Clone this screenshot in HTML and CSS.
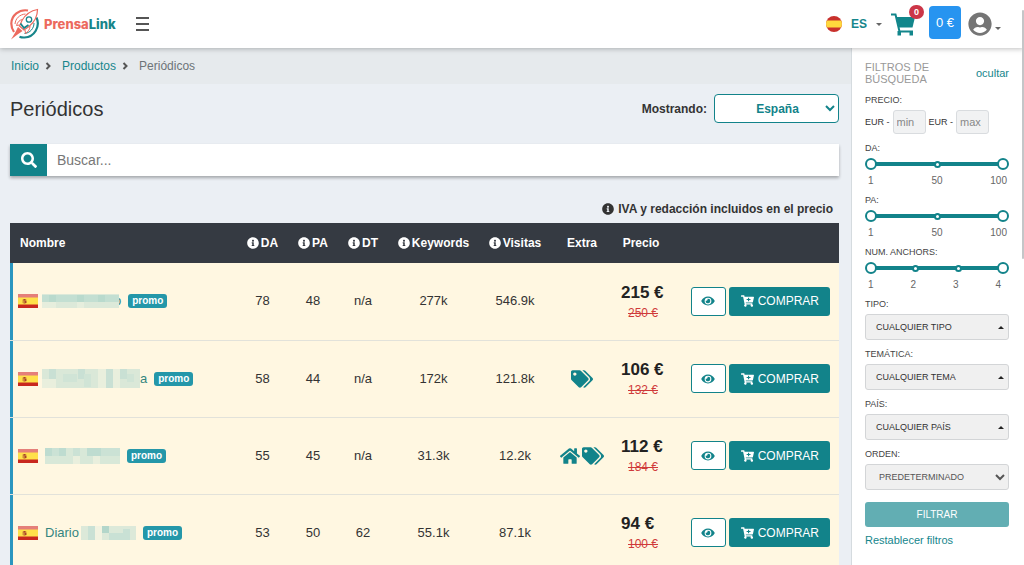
FILE: index.html
```html
<!DOCTYPE html>
<html lang="es">
<head>
<meta charset="utf-8">
<meta name="viewport" content="width=device-width, initial-scale=1">
<title>Periódicos - PrensaLink</title>
<link rel="stylesheet" href="styles.css">
</head>
<body>
<svg class="sprite" aria-hidden="true">
  <symbol id="i-info" viewBox="0 0 512 512"><path d="M256 8C119.043 8 8 119.083 8 256c0 136.997 111.043 248 248 248s248-111.003 248-248C504 119.083 392.957 8 256 8zm0 110c23.196 0 42 18.804 42 42s-18.804 42-42 42-42-18.804-42-42 18.804-42 42-42zm56 254c0 6.627-5.373 12-12 12h-88c-6.627 0-12-5.373-12-12v-24c0-6.627 5.373-12 12-12h12v-64h-12c-6.627 0-12-5.373-12-12v-24c0-6.627 5.373-12 12-12h64c6.627 0 12 5.373 12 12v100h12c6.627 0 12 5.373 12 12v24z"/></symbol>
  <symbol id="i-tags" viewBox="0 0 640 512"><path d="M497.941 225.941L286.059 14.059A48 48 0 0 0 252.118 0H48C21.49 0 0 21.49 0 48v204.118a48 48 0 0 0 14.059 33.941l211.882 211.882c18.744 18.745 49.136 18.746 67.882 0l204.118-204.118c18.745-18.745 18.745-49.137 0-67.882zM112 160c-26.51 0-48-21.49-48-48s21.49-48 48-48 48 21.49 48 48-21.49 48-48 48zm513.941 133.823L421.823 497.941c-18.745 18.745-49.137 18.745-67.882 0l-.36-.36L527.64 323.522c16.999-16.999 26.362-39.6 26.362-63.64s-9.362-46.641-26.362-63.64L331.397 0h48.721a48 48 0 0 1 33.941 14.059l211.882 211.882c18.745 18.745 18.745 49.137 0 67.882z"/></symbol>
  <symbol id="i-home" viewBox="0 0 576 512"><path d="M280.37 148.26L96 300.11V464a16 16 0 0 0 16 16l112.06-.29a16 16 0 0 0 15.92-16V368a16 16 0 0 1 16-16h64a16 16 0 0 1 16 16v95.64a16 16 0 0 0 16 16.05L464 480a16 16 0 0 0 16-16V300L295.67 148.26a12.19 12.19 0 0 0-15.3 0zM571.6 251.47L488 182.56V44.05a12 12 0 0 0-12-12h-56a12 12 0 0 0-12 12v72.61L318.47 43a48 48 0 0 0-61 0L4.34 251.47a12 12 0 0 0-1.6 16.9l25.5 31A12 12 0 0 0 45.15 301l235.22-193.74a12.19 12.19 0 0 1 15.3 0L530.9 301a12 12 0 0 0 16.9-1.6l25.5-31a12 12 0 0 0-1.7-16.93z"/></symbol>
  <symbol id="i-eye" viewBox="0 0 576 512"><path d="M572.52 241.4C518.29 135.59 410.93 64 288 64S57.68 135.64 3.48 241.41a32.35 32.35 0 0 0 0 29.19C57.71 376.41 165.07 448 288 448s230.32-71.64 284.52-177.41a32.35 32.35 0 0 0 0-29.19zM288 400a144 144 0 1 1 144-144 143.93 143.93 0 0 1-144 144zm0-240a95.31 95.31 0 0 0-25.31 3.79 47.85 47.85 0 0 1-66.9 66.9A95.78 95.78 0 1 0 288 160z"/></symbol>
  <symbol id="i-cart-plus" viewBox="0 0 576 512"><path d="M504.717 320H211.572l6.545 32h268.418c15.401 0 26.816 14.301 23.403 29.319l-5.517 24.276C523.112 414.668 536 433.828 536 456c0 31.202-25.519 56.444-56.824 55.994-29.823-.429-54.35-24.631-55.155-54.447-.44-16.287 6.085-31.049 16.803-41.548H231.176C241.553 426.165 248 440.326 248 456c0 31.813-26.528 57.431-58.67 55.938-28.54-1.325-51.751-24.385-53.251-52.917-1.158-22.034 10.436-41.455 28.051-51.586L93.883 64H24C10.745 64 0 53.255 0 40V24C0 10.745 10.745 0 24 0h102.529c11.401 0 21.228 8.021 23.513 19.19L159.208 64H551.99c15.401 0 26.816 14.301 23.403 29.319l-47.273 208C525.637 312.246 515.923 320 504.717 320zM408 168h-48v-40c0-8.837-7.163-16-16-16h-16c-8.837 0-16 7.163-16 16v40h-48c-8.837 0-16 7.163-16 16v16c0 8.837 7.163 16 16 16h48v40c0 8.837 7.163 16 16 16h16c8.837 0 16-7.163 16-16v-40h48c8.837 0 16-7.163 16-16v-16c0-8.837-7.163-16-16-16z"/></symbol>
  <symbol id="i-flag" viewBox="0 0 20 14"><path fill="#e57f79" d="M0 0h20v4H0z"/><path fill="#ffe14a" d="M0 3.5h20V11H0z"/><path fill="#c8281e" d="M0 10.5h20V14H0z"/><path fill="#d09038" d="M4.500 5.500h4v3.600l-2 1-2-1z"/><path fill="#a8402a" d="M5.500 5h2v1.400h-2zM6.700 7h1.600v2H6.700z"/></symbol>
  <symbol id="i-chevron" viewBox="0 0 7 8"><path d="M1.500 1l3 3-3 3" fill="none" stroke="#555" stroke-width="2"/></symbol>
</svg>

<header class="topbar">
  <a class="brand" href="#">
    <svg class="brand-mark" viewBox="0 0 30 32" aria-hidden="true" fill="none">
      <path d="M18 2.500C9 1 1.500 7.500 1.300 15.500c0 3.500 1 6 2.700 8.500" stroke="#ec6a5e" stroke-width="2.200"/>
      <path d="M15.500 6C9.500 6.500 5.500 10.500 5 16" stroke="#ec6a5e" stroke-width="1"/>
      <path d="M26.500 9.500c4 9-2 19.500-12 20-2 .1-3.500-.2-5-.8" stroke="#17858a" stroke-width="2.200"/>
      <path d="M24 15c0 5.500-4 10-9.500 10.500" stroke="#17858a" stroke-width="1"/>
      <path d="M27.500 1.500C21 2.500 15.500 6.500 12 12.500L9.500 18l4.500 4 5-3.500C24.500 14 27.500 8.500 27.500 1.500z" fill="#fff" stroke="#ec6a5e" stroke-width="1.200"/>
      <path d="M12.500 11.500C9.500 12 7.500 14 6.500 17.500l3-.5M20 18c0 3-1.500 5.500-4.500 7.500l-.500-3.500" stroke="#ec6a5e" stroke-width="1"/>
      <circle cx="19" cy="11.500" r="2.700" stroke="#17858a" stroke-width="1.300"/>
      <path d="M10.500 15.500l3.500 4.500 4.500-3" stroke="#17858a" stroke-width="1.800"/>
      <path d="M8 19l4.500 4-5 3.500L1 31.500l4.500-7.500z" fill="#ec6a5e"/>
    </svg>
    <span class="brand-name">Prensa<span class="brand-alt">Link</span></span>
  </a>
  <button class="menu-button" type="button" aria-label="Menú"><span></span><span></span><span></span></button>
  <nav class="tools" aria-label="Cuenta">
    <button class="language" type="button">
      <svg class="round-flag" viewBox="0 0 16 16" aria-hidden="true"><clipPath id="disc"><circle cx="8" cy="8" r="8"/></clipPath><g clip-path="url(#disc)"><path fill="#c8302c" d="M0 0h16v16H0z"/><path fill="#ffd83d" d="M0 4.500h16v7H0z"/></g></svg>
      ES
      <span class="caret"></span>
    </button>
    <a class="cart" href="#" aria-label="Carrito">
      <svg viewBox="0 0 24 23" aria-hidden="true"><path fill="none" stroke="#12868b" stroke-width="2" d="M0 1.500h4.500L8.500 18.500H22"/><path fill="#12868b" d="M5.500 4H24l-2.500 10.500H8z"/><path fill="#12868b" d="M6.500 18h3.500v4.500H6.500zM18.500 18H22v4.500h-3.500z"/></svg>
      <span class="cart-count">0</span>
    </a>
    <a class="balance" href="#">0 €</a>
    <button class="account" type="button" aria-label="Usuario">
      <svg viewBox="0 0 496 512" aria-hidden="true"><path fill="#757575" d="M248 8C111 8 0 119 0 256s111 248 248 248 248-111 248-248S385 8 248 8zm0 96c48.600 0 88 39.400 88 88s-39.400 88-88 88-88-39.400-88-88 39.400-88 88-88zm0 344c-58.700 0-111.300-26.600-146.500-68.200 18.800-35.400 55.600-59.800 98.500-59.800 2.400 0 4.800.4 7.100 1.100 13 4.200 26.600 6.900 40.900 6.900 14.300 0 28-2.700 40.900-6.900 2.300-.7 4.700-1.100 7.100-1.100 42.900 0 79.700 24.400 98.500 59.800C359.300 421.400 306.700 448 248 448z"/></svg>
      <span class="caret"></span>
    </button>
  </nav>
</header>

<div class="layout">
  <main class="main">
    <nav class="breadcrumb" aria-label="Ruta">
      <a href="#">Inicio</a><svg class="sep" aria-hidden="true"><use href="#i-chevron"/></svg>
      <a href="#">Productos</a><svg class="sep" aria-hidden="true"><use href="#i-chevron"/></svg>
      <span>Periódicos</span>
    </nav>
    <div class="content">
      <div class="title-row">
        <h1>Periódicos</h1>
        <label for="country">Mostrando:</label>
        <select id="country" class="country"><option>España</option></select>
      </div>
      <form class="search">
        <button type="button" aria-label="Buscar"><svg viewBox="0 0 512 512" aria-hidden="true"><path fill="#fff" d="M505 442.700L405.300 343c-4.500-4.500-10.600-7-17-7H372c27.600-35.300 44-79.700 44-128C416 93.100 322.900 0 208 0S0 93.100 0 208s93.100 208 208 208c48.300 0 92.700-16.400 128-44v16.300c0 6.400 2.500 12.500 7 17l99.700 99.700c9.400 9.400 24.600 9.400 33.900 0l28.300-28.300c9.400-9.400 9.400-24.600.1-34zM208 336c-70.700 0-128-57.200-128-128 0-70.700 57.200-128 128-128 70.700 0 128 57.200 128 128 0 70.700-57.200 128-128 128z"/></svg></button>
        <input type="text" placeholder="Buscar..." aria-label="Buscar">
      </form>
      <p class="vat-note"><svg class="info" aria-hidden="true"><use href="#i-info"/></svg>IVA y redacción incluidos en el precio</p>

      <table class="papers">
        <colgroup><col><col class="c-da"><col class="c-pa"><col class="c-pa"><col class="c-key"><col class="c-vis"><col class="c-extra"><col class="c-price"><col class="c-act"></colgroup>
        <thead>
          <tr>
            <th class="name-head" scope="col">Nombre</th>
            <th scope="col"><svg class="info" aria-hidden="true"><use href="#i-info"/></svg>DA</th>
            <th scope="col"><svg class="info" aria-hidden="true"><use href="#i-info"/></svg>PA</th>
            <th scope="col"><svg class="info" aria-hidden="true"><use href="#i-info"/></svg>DT</th>
            <th scope="col"><svg class="info" aria-hidden="true"><use href="#i-info"/></svg>Keywords</th>
            <th scope="col"><svg class="info" aria-hidden="true"><use href="#i-info"/></svg>Visitas</th>
            <th scope="col">Extra</th>
            <th scope="col">Precio</th>
            <td></td>
          </tr>
        </thead>
        <tbody>
          <tr>
            <td class="name"><div class="name-line"><svg class="flag" aria-hidden="true"><use href="#i-flag"/></svg>
              <a href="#"><svg class="mosaic" width="77" height="14" viewBox="0 0 77 14" aria-hidden="true"><path fill="#dce9d9" d="M0 0h77v14H0z"/><path fill="#c3dfd2" d="M0 1h7v7H0zM14 1h21v7H14zM42 1h14v7H42zM63 1h14v7H63z"/><path fill="#b9dacd" d="M7 1h7v7H7zM35 1h7v7h-7zM56 1h7v7h-7z"/><path fill="#e6eedd" d="M0 8h14v6H0zM35 8h7v6h-7z"/></svg><span class="tail">o</span></a>
              <span class="promo">promo</span></div></td>
            <td>78</td><td>48</td><td>n/a</td><td>277k</td><td>546.9k</td><td></td>
            <td class="price"><strong>215 €</strong><del>250 €</del></td>
            <td><div class="actions"><button class="view" type="button" aria-label="Ver"><svg aria-hidden="true"><use href="#i-eye"/></svg></button><button class="buy" type="button"><svg aria-hidden="true"><use href="#i-cart-plus"/></svg>COMPRAR</button></div></td>
          </tr>
          <tr>
            <td class="name"><div class="name-line"><svg class="flag" aria-hidden="true"><use href="#i-flag"/></svg>
              <a href="#"><svg class="mosaic" width="98" height="19" viewBox="0 0 98 19" aria-hidden="true"><path fill="#dae8d8" d="M0 0h98v19H0z"/><path fill="#c9e0d4" d="M7 0h7v10H7zM36 0h7v10h-7zM64 0h7v19h-7zM78 0h7v10h-7z"/><path fill="#d0e4d6" d="M21 5h14v8H21zM42 5h7v13h-7zM85 5h7v8h-7z"/><path fill="#e9efdd" d="M0 10h14v9H0zM56 0h8v19h-8zM71 0h7v19h-7z"/></svg><span>a</span></a>
              <span class="promo">promo</span></div></td>
            <td>58</td><td>44</td><td>n/a</td><td>172k</td><td>121.8k</td>
            <td><div class="extras"><svg class="tags" aria-label="Etiquetas"><use href="#i-tags"/></svg></div></td>
            <td class="price"><strong>106 €</strong><del>132 €</del></td>
            <td><div class="actions"><button class="view" type="button" aria-label="Ver"><svg aria-hidden="true"><use href="#i-eye"/></svg></button><button class="buy" type="button"><svg aria-hidden="true"><use href="#i-cart-plus"/></svg>COMPRAR</button></div></td>
          </tr>
          <tr>
            <td class="name"><div class="name-line"><svg class="flag" aria-hidden="true"><use href="#i-flag"/></svg>
              <a class="spaced" href="#"><svg class="mosaic" width="75" height="16" viewBox="0 0 75 16" aria-hidden="true"><path fill="#d8e8d8" d="M0 0h75v16H0z"/><path fill="#bedcd0" d="M0 0h7v8H0zM14 0h7v8h-7zM42 0h14v8H42z"/><path fill="#cbe2d5" d="M7 0h7v8H7zM28 0h7v8h-7zM56 0h19v8H56z"/><path fill="#e9efdd" d="M28 8h7v8h-7zM48 8h7v8h-7z"/></svg></a>
              <span class="promo">promo</span></div></td>
            <td>55</td><td>45</td><td>n/a</td><td>31.3k</td><td>12.2k</td>
            <td><div class="extras"><svg class="home" aria-label="Portada"><use href="#i-home"/></svg><svg class="tags" aria-label="Etiquetas"><use href="#i-tags"/></svg></div></td>
            <td class="price"><strong>112 €</strong><del>184 €</del></td>
            <td><div class="actions"><button class="view" type="button" aria-label="Ver"><svg aria-hidden="true"><use href="#i-eye"/></svg></button><button class="buy" type="button"><svg aria-hidden="true"><use href="#i-cart-plus"/></svg>COMPRAR</button></div></td>
          </tr>
          <tr>
            <td class="name"><div class="name-line"><svg class="flag" aria-hidden="true"><use href="#i-flag"/></svg>
              <a class="spaced" href="#"><span class="word">Diario</span><svg class="mosaic" width="55" height="14" viewBox="0 0 55 14" aria-hidden="true"><path fill="#dce9d9" d="M0 0h55v14H0z"/><path fill="#c9e1d5" d="M7 0h7v14H7zM28 7h14v7H28zM42 3h7v11h-7z"/><path fill="#b3d6ca" d="M21 0h7v7h-7z"/><path fill="#f2f3e1" d="M14 0h7v14h-7z"/></svg></a>
              <span class="promo">promo</span></div></td>
            <td>53</td><td>50</td><td>62</td><td>55.1k</td><td>87.1k</td><td></td>
            <td class="price"><strong>94 €</strong><del>100 €</del></td>
            <td><div class="actions"><button class="view" type="button" aria-label="Ver"><svg aria-hidden="true"><use href="#i-eye"/></svg></button><button class="buy" type="button"><svg aria-hidden="true"><use href="#i-cart-plus"/></svg>COMPRAR</button></div></td>
          </tr>
        </tbody>
      </table>
    </div>
  </main>

  <aside class="filters">
    <div class="filters-head"><h2>FILTROS DE BÚSQUEDA</h2><a href="#">ocultar</a></div>
    <div class="field">
      <span class="caption">PRECIO:</span>
      <div class="price-range">
        <label for="min">EUR -</label><input id="min" type="text" placeholder="min">
        <label for="max">EUR -</label><input id="max" type="text" placeholder="max">
      </div>
    </div>
    <div class="range-field">
      <span class="caption">DA:</span>
      <div class="slider"><div class="track"><i></i><i></i><i></i></div><input type="range" min="1" max="100" value="1" aria-label="DA mínimo"><input type="range" min="1" max="100" value="100" aria-label="DA máximo"></div>
      <div class="scale"><span>1</span><span>50</span><span>100</span></div>
    </div>
    <div class="range-field">
      <span class="caption">PA:</span>
      <div class="slider"><div class="track"><i></i><i></i><i></i></div><input type="range" min="1" max="100" value="1" aria-label="PA mínimo"><input type="range" min="1" max="100" value="100" aria-label="PA máximo"></div>
      <div class="scale"><span>1</span><span>50</span><span>100</span></div>
    </div>
    <div class="range-field">
      <span class="caption">NUM. ANCHORS:</span>
      <div class="slider"><div class="track"><i></i><i></i><i></i><i></i></div><input type="range" min="1" max="4" value="1" aria-label="Anchors mínimo"><input type="range" min="1" max="4" value="4" aria-label="Anchors máximo"></div>
      <div class="scale scale-even"><span>1</span><span>2</span><span>3</span><span>4</span></div>
    </div>
    <div class="field"><span class="caption" id="l-tipo">TIPO:</span><button class="picker" type="button" aria-describedby="l-tipo">CUALQUIER TIPO<span class="caret caret-up"></span></button></div>
    <div class="field"><span class="caption" id="l-tema">TEMÁTICA:</span><button class="picker" type="button" aria-describedby="l-tema">CUALQUIER TEMA<span class="caret caret-up"></span></button></div>
    <div class="field"><span class="caption" id="l-pais">PAÍS:</span><button class="picker" type="button" aria-describedby="l-pais">CUALQUIER PAÍS<span class="caret caret-up"></span></button></div>
    <div class="field"><label class="caption" for="order">ORDEN:</label><select id="order" class="order"><option>PREDETERMINADO</option></select></div>
    <button class="apply" type="button">FILTRAR</button>
    <a class="reset" href="#">Restablecer filtros</a>
  </aside>
</div>
<div class="page-scroll" aria-hidden="true"></div>
</body>
</html>
```

FILE: styles.css
```css
* { box-sizing: border-box; }

html { overflow: hidden; height: 100%; }

body {
  --teal: #12838a;
  margin: 0;
  height: 100%;
  display: flex;
  flex-direction: column;
  overflow: hidden;
  background: #fff;
  color: #333;
  font: 12px/16px "Liberation Sans", Arial, sans-serif;
}

button, input, select { font: inherit; color: inherit; margin: 0; }
button { padding: 0; border: 0; background: none; cursor: pointer; }
a { color: #16868c; text-decoration: none; }
svg { display: block; flex: none; }
.sprite { position: absolute; width: 0; height: 0; }

.caret {
  border: 3px solid transparent;
  border-top-color: #666;
  border-bottom: 0;
}
.caret-up {
  border-top: 0;
  border-bottom: 3px solid #222;
}

/* Top bar */
.topbar {
  position: relative;
  z-index: 2;
  flex: none;
  display: flex;
  align-items: center;
  height: 48px;
  padding: 0 23px 0 10px;
  background: #fff;
  box-shadow: 0 1px 5px rgba(0, 0, 0, .25);
}
.brand { display: flex; align-items: center; gap: 4px; }
.brand-mark { width: 30px; height: 32px; }
.brand-name { font: 800 13px/18px Inter, sans-serif; color: #ec6a5e; }
.brand-alt { color: #17858a; }
.menu-button { display: grid; gap: 4px; width: 13px; margin-left: 20px; }
.menu-button span { height: 2px; background: #555; }
.tools { display: flex; align-items: center; margin-left: auto; }
.language { display: flex; align-items: center; gap: 9px; color: #16868c; font-weight: bold; }
.round-flag { width: 16px; height: 16px; }
.cart { position: relative; margin-left: 9px; }
.cart svg { width: 24px; height: 23px; }
.cart-count {
  position: absolute;
  top: -8px;
  right: -9px;
  min-width: 15px;
  border-radius: 7px;
  background: #cc3648;
  color: #fff;
  font: bold 9px/14px "Liberation Sans", Arial, sans-serif;
  text-align: center;
}
.balance {
  margin: 0 7px 4px 14px;
  padding: 0 7px;
  border-radius: 4px;
  background: #2794f0;
  color: #fff;
  font-size: 13px;
  line-height: 33px;
}
.account { display: flex; align-items: center; gap: 3px; }
.account svg { width: 24px; height: 24px; }
.account .caret { margin-top: 8px; }

/* Layout */
.layout { flex: 1; min-height: 0; display: flex; margin-right: 4px; }
.main { flex: 1; min-width: 0; overflow: hidden; background: #ebeff4; }
.breadcrumb {
  display: flex;
  align-items: center;
  height: 36px;
  padding: 0 11px;
  background: #e6eaed;
  color: #6d7478;
}
.sep { width: 7px; height: 8px; margin: 0 10px 0 6px; }
.content { padding: 10px 12px 0 10px; }
.title-row { display: flex; align-items: center; }
h1 { flex: 1; margin: 0; font-size: 20px; line-height: 28px; font-weight: normal; }
.title-row label { margin-right: 7px; font-weight: bold; }
.country {
  width: 125px;
  height: 29px;
  padding: 0 0 0 14px;
  border: 1px solid var(--teal);
  border-radius: 4px;
  background: #fff;
  color: var(--teal);
  font-weight: bold;
  text-align-last: center;
}
.search {
  display: flex;
  height: 32px;
  margin: 21px 0 25px;
  background: #fff;
  box-shadow: 0 2px 3px rgba(0, 0, 0, .3);
}
.search button { display: grid; place-items: center; width: 37px; background: var(--teal); }
.search svg { width: 16px; height: 16px; }
.search input { flex: 1; min-width: 0; padding: 0 10px; border: 0; outline: 0; background: none; font-size: 14px; }
.search input::placeholder { color: #777; opacity: 1; }
.vat-note {
  display: flex;
  align-items: center;
  justify-content: flex-end;
  margin: 0 6px 6px 0;
  font-weight: bold;
}
.info { display: inline-block; width: 12px; height: 12px; margin-right: 2px; vertical-align: -2px; fill: currentColor; }
.vat-note .info { margin-right: 4px; }

/* Table */
.papers { width: 100%; table-layout: fixed; border-collapse: collapse; text-align: center; font-size: 13px; }
.papers th, .papers td { padding: 0; white-space: nowrap; }
.c-da { width: 51px; }
.c-pa { width: 50px; }
.c-key { width: 91px; }
.c-vis { width: 72px; }
.c-extra { width: 62px; }
.c-price { width: 56px; }
.c-act { width: 170px; }
thead tr { height: 40px; background: #353a42; color: #fff; font-size: 12px; }
.papers .name-head { padding-left: 10px; text-align: left; }
tbody tr { height: 77px; background: #fff7e1; }
tbody tr + tr { border-top: 1px solid #e2e2da; }
.papers .name { padding-left: 8px; box-shadow: inset 3px 0 #2b96bf; text-align: left; }
.name-line { display: flex; align-items: center; }
.name a { display: flex; align-items: center; margin: 0 7px 0 4px; color: #35857f; }
.name a.spaced { margin-left: 7px; }
.flag { width: 20px; height: 14px; }
.mosaic { position: relative; }
.tail { margin-left: -5px; }
.word { margin-right: 2px; }
.promo {
  padding: 0 4px;
  border-radius: 3px;
  background: #2497a9;
  color: #fff;
  font-size: 10px;
  line-height: 14px;
  font-weight: bold;
}
.extras { display: flex; justify-content: center; gap: 2px; fill: var(--teal); }
.tags { width: 22px; height: 18px; }
.home { width: 20px; height: 18px; }
.papers .price { padding: 3px 0 0 8px; text-align: left; }
.price strong { display: block; font-size: 17px; line-height: 20px; color: #222; }
.price del { display: block; margin-left: 7px; font-size: 12px; line-height: 20px; color: #cf3a3a; }
.actions { display: flex; justify-content: flex-end; gap: 3px; padding-right: 9px; }
.actions button { display: flex; align-items: center; justify-content: center; height: 29px; border-radius: 3px; }
.view { width: 35px; border: 1px solid var(--teal); background: #fff; fill: var(--teal); }
.view svg { width: 14px; height: 12px; }
.buy { gap: 4px; background: var(--teal); color: #fff; fill: #fff; font-size: 12px; }
.buy svg { width: 13px; height: 12px; }
.actions .buy { padding: 0 11px 0 12px; }

/* Filters */
.filters {
  flex: none;
  width: 169px;
  padding: 13px 11px 0 13px;
  border-left: 1px solid #d5dbdf;
  background: #fff;
  font-size: 9px;
  line-height: 12px;
}
.filters-head { display: flex; align-items: center; justify-content: space-between; margin-bottom: 9px; }
.filters-head a, .reset { font-size: 11px; }
h2 { width: 80px; margin: 0; color: #999; font-size: 11px; line-height: 12px; font-weight: normal; }
.caption { display: block; color: #444; }
.field { margin-bottom: 8px; }
.price-range { display: flex; align-items: center; gap: 3px; margin-top: 4px; }
.price-range input {
  width: 33px;
  height: 24px;
  padding: 0 3px;
  border: 1px solid #d9dcdf;
  border-radius: 3px;
  background: #f1f2f3;
  font-size: 11px;
}
.price-range input::placeholder { color: #888; opacity: 1; }
.range-field { margin-bottom: 7px; }
.slider { display: grid; align-items: center; height: 14px; margin-top: 3px; }
.slider > * { grid-area: 1 / 1; }
.track {
  display: flex;
  align-items: center;
  justify-content: space-between;
  height: 4px;
  margin: 0 3px;
  background: var(--teal);
}
.track i { flex: none; width: 7px; height: 7px; border: 2px solid var(--teal); border-radius: 50%; background: #fff; }
.slider input { appearance: none; width: 100%; height: 12px; background: none; pointer-events: none; }
.slider input::-webkit-slider-thumb {
  appearance: none;
  width: 12px;
  height: 12px;
  border: 2px solid var(--teal);
  border-radius: 50%;
  background: #fff;
  pointer-events: auto;
}
.scale { display: flex; justify-content: space-between; margin-top: 4px; padding: 0 2px 0 3px; color: #666; font-size: 10px; }
.scale span:nth-child(2) { margin-left: 10px; }
.scale-even { padding-right: 8px; }
.scale-even span:nth-child(2) { margin-left: 0; }
.picker, .order {
  width: 100%;
  height: 26px;
  margin-top: 4px;
  border: 1px solid #d3d5d7;
  border-radius: 3px;
  background: #f0f0f0;
}
.picker { display: flex; align-items: center; justify-content: space-between; padding: 0 4px 0 10px; color: #333; }
.order { display: block; padding: 0 0 0 9px; color: #555; }
.apply {
  display: block;
  width: 100%;
  height: 25px;
  margin: 12px 0 7px;
  border-radius: 3px;
  background: #62aeb3;
  color: #fff;
  font-size: 10px;
}
.reset { display: block; }

/* Page scroll thumb at the window edge */
.page-scroll {
  position: fixed;
  z-index: 3;
  top: 10px;
  right: 0;
  width: 2px;
  height: 44%;
  border-radius: 2px;
  background: #c4c6c8;
}
```
